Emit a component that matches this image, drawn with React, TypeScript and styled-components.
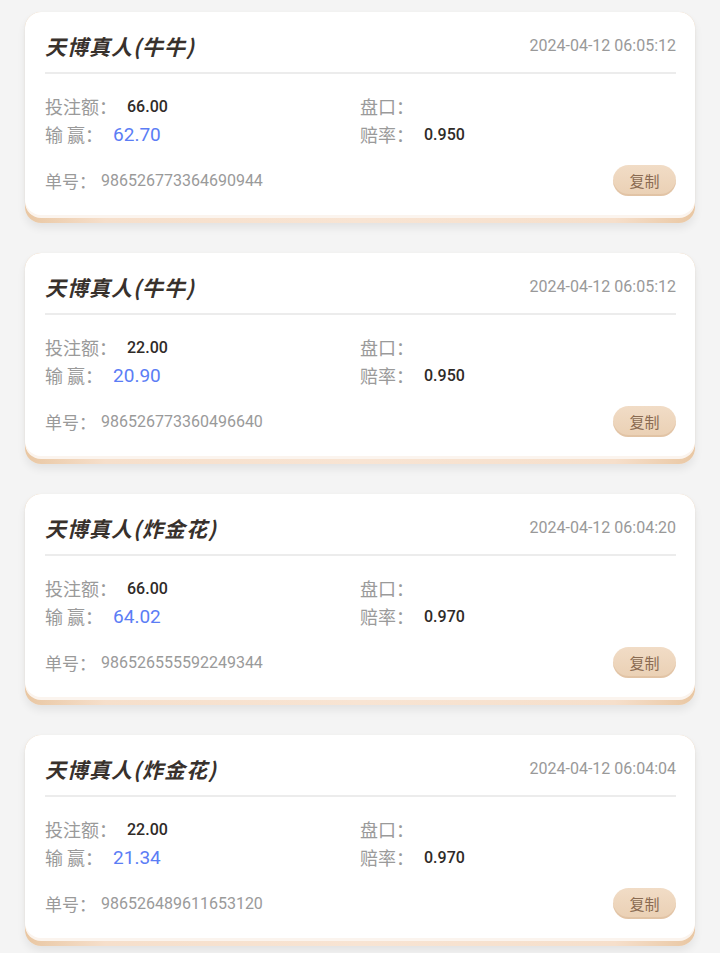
import React from 'react';
import styled, { createGlobalStyle } from 'styled-components';

const GlobalStyle = createGlobalStyle`
    html, body {
        margin: 0;
        padding: 0;
        background: #f4f4f4;
    }
    body {
        font-family: Roboto, "Noto Sans CJK SC", sans-serif;
    }
`;

const List = styled.div`
    display: flex;
    flex-direction: column;
    gap: 30px;
    padding: 12px 25px 20px;
`;

const CardWrap = styled.div`
    border-radius: 16px;
    padding-bottom: 8px;
    background: linear-gradient(90deg, #e9c7a3 0%, #f6dfcb 12%, #f8e4d3 50%, #f6dfcb 88%, #e9c7a3 100%);
    box-shadow: 0 5px 8px rgba(0, 0, 0, 0.07);
`;

const Card = styled.div`
    background: #fff;
    border-radius: 16px;
    padding: 0 19px 19px 20px;
    box-shadow: 0 3px 0 #fbf4ee, 0 1px 2px rgba(180, 140, 100, 0.15);
`;

const Header = styled.div`
    height: 62px;
    padding-top: 7px;
    box-sizing: border-box;
    display: flex;
    align-items: center;
    justify-content: space-between;
    border-bottom: 2px solid #ececec;
`;

const Title = styled.div`
    font-family: "Noto Sans CJK SC", sans-serif;
    font-size: 21px;
    font-weight: 600;
    font-style: italic;
    letter-spacing: 1px;
    color: #38312c;
`;

const Time = styled.div`
    font-family: Roboto, sans-serif;
    font-size: 16px;
    color: #999;
`;

const Info = styled.div`
    display: grid;
    grid-template-columns: 315px 1fr;
    margin-top: 18px;
`;

const Item = styled.div`
    display: flex;
    align-items: center;
    height: 28px;
`;

const Label = styled.span`
    font-family: "Noto Sans CJK SC", sans-serif;
    font-size: 18px;
    color: #9a9a9a;
    white-space: pre;
`;

const Value = styled.span<{ $blue?: boolean }>`
    margin-left: 10px;
    font-family: Roboto, sans-serif;
    font-size: ${p => (p.$blue ? '19px' : '16px')};
    font-weight: ${p => (p.$blue ? 400 : 500)};
    color: ${p => (p.$blue ? '#5b7df5' : '#2f2b28')};
`;

const Footer = styled.div`
    display: flex;
    align-items: center;
    justify-content: space-between;
    margin-top: 17px;
`;

const OrderNo = styled.div`
    display: flex;
    align-items: center;
`;

const OrderLabel = styled.span`
    font-family: "Noto Sans CJK SC", sans-serif;
    font-size: 17px;
    color: #9a9a9a;
`;

const OrderValue = styled.span`
    margin-left: 5px;
    font-family: Roboto, sans-serif;
    font-size: 16px;
    color: #9a9a9a;
`;

const CopyBtn = styled.button`
    width: 63px;
    height: 31px;
    border: none;
    border-radius: 16px;
    padding: 0;
    background: linear-gradient(180deg, #f1dcc6 0%, #ead0b4 100%);
    box-shadow: inset 0 -2px 0 rgba(214, 180, 146, 0.45);
    font-family: "Noto Sans CJK SC", sans-serif;
    font-size: 15px;
    color: #8a6b52;
`;

const orders = [
    { game: '天博真人(牛牛)', time: '2024-04-12 06:05:12', bet: '66.00', win: '62.70', odds: '0.950', no: '986526773364690944' },
    { game: '天博真人(牛牛)', time: '2024-04-12 06:05:12', bet: '22.00', win: '20.90', odds: '0.950', no: '986526773360496640' },
    { game: '天博真人(炸金花)', time: '2024-04-12 06:04:20', bet: '66.00', win: '64.02', odds: '0.970', no: '986526555592249344' },
    { game: '天博真人(炸金花)', time: '2024-04-12 06:04:04', bet: '22.00', win: '21.34', odds: '0.970', no: '986526489611653120' },
];

export default function App() {
    return (
        <>
            <GlobalStyle />
            <List>
                {orders.map((o, i) => (
                    <CardWrap key={i}>
                        <Card>
                            <Header>
                                <Title>{o.game}</Title>
                                <Time>{o.time}</Time>
                            </Header>
                            <Info>
                                <Item>
                                    <Label>投注额：</Label>
                                    <Value>{o.bet}</Value>
                                </Item>
                                <Item>
                                    <Label>盘口：</Label>
                                </Item>
                                <Item>
                                    <Label>输 赢：</Label>
                                    <Value $blue>{o.win}</Value>
                                </Item>
                                <Item>
                                    <Label>赔率：</Label>
                                    <Value>{o.odds}</Value>
                                </Item>
                            </Info>
                            <Footer>
                                <OrderNo>
                                    <OrderLabel>单号：</OrderLabel>
                                    <OrderValue>{o.no}</OrderValue>
                                </OrderNo>
                                <CopyBtn>复制</CopyBtn>
                            </Footer>
                        </Card>
                    </CardWrap>
                ))}
            </List>
        </>
    );
}
